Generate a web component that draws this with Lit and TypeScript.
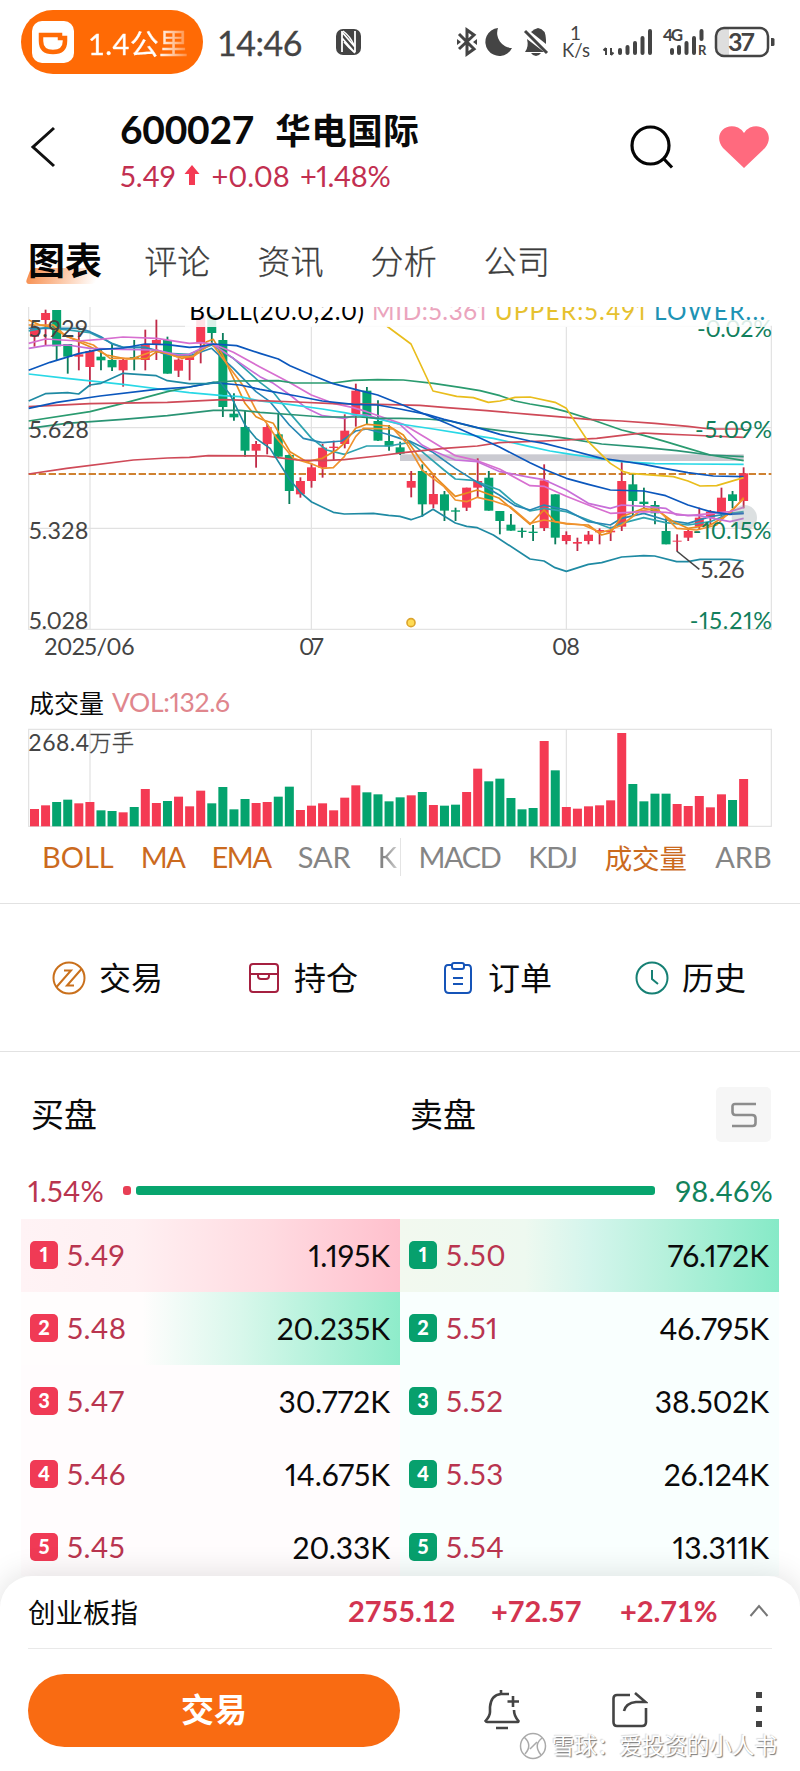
import { LitElement, html, svg, css } from "lit";
import { customElement, property } from "lit/decorators.js";
import { classMap } from "lit/directives/class-map.js";

const RED = "#f43a53";
const GREEN = "#04a36e";

// The charts draw in a space of three units per pixel.
const STEP = 33.24;
const FIRST = 103.5;
const BODY = 27;
const cx = (i: number) => FIRST + i * STEP;

// direction, open/close edges, high, low
type Candle = [string, number, number, number, number];
const CANDLES: Candle[] = [
  ["r", 98, 125, 90, 155], ["r", 54, 75, 44, 150], ["g", 45, 154, 45, 195], ["g", 147, 185, 147, 236],
  ["r", 178, 185, 110, 226], ["r", 168, 216, 165, 275], ["g", 185, 196, 160, 226], ["g", 195, 217, 145, 228],
  ["r", 195, 226, 190, 275], ["g", 186, 192, 135, 226], ["r", 147, 195, 104, 226], ["r", 135, 150, 74, 195],
  ["g", 135, 236, 125, 236], ["r", 194, 227, 190, 246], ["r", 185, 195, 180, 256], ["r", 60, 145, 60, 205],
  ["g", 60, 114, 60, 150], ["g", 135, 336, 114, 366], ["g", 356, 367, 295, 377], ["g", 396, 467, 346, 485],
  ["r", 447, 467, 438, 518], ["r", 396, 447, 387, 478], ["g", 418, 485, 357, 488], ["g", 480, 588, 478, 627],
  ["r", 558, 598, 547, 608], ["r", 517, 558, 505, 578], ["r", 458, 518, 447, 548], ["r", 455, 459, 437, 497],
  ["r", 407, 447, 358, 460], ["r", 287, 357, 266, 395], ["g", 287, 364, 276, 388], ["g", 378, 437, 316, 438],
  ["g", 438, 454, 390, 467], ["g", 457, 476, 440, 480], ["r", 558, 578, 528, 607], ["g", 528, 628, 508, 665],
  ["r", 597, 628, 536, 640], ["g", 598, 647, 588, 678], ["g", 646, 650, 638, 678], ["r", 578, 638, 578, 648],
  ["r", 558, 578, 490, 608], ["g", 548, 647, 528, 647], ["g", 648, 678, 648, 718], ["g", 689, 707, 657, 707],
  ["g", 707, 711, 698, 728], ["g", 710, 714, 690, 738], ["r", 556, 699, 508, 708], ["g", 598, 728, 598, 748],
  ["r", 720, 738, 709, 748], ["r", 741, 746, 728, 768], ["r", 719, 738, 708, 748], ["r", 705, 712, 700, 748],
  ["r", 707, 712, 695, 738], ["r", 558, 695, 500, 708], ["g", 568, 618, 535, 665], ["g", 620, 627, 578, 640],
  ["g", 630, 655, 618, 688], ["g", 708, 748, 670, 748], ["r", 737, 740, 718, 768], ["r", 708, 728, 700, 738],
  ["r", 668, 695, 638, 705], ["r", 650, 668, 645, 690], ["r", 608, 655, 578, 665], ["g", 598, 618, 588, 640],
  ["r", 535, 618, 517, 640],
];

const VOLUMES: [string, number][] = (
  "r52 r63 g73 g80 r69 r73 g48 g46 r42 g58 r112 r70 g76 r89 r60 r107 g69 g118 g51 g82 r70 r73 g89 g119 " +
  "r49 r62 r69 r48 r86 r123 g102 g96 g75 g87 r93 g103 r64 g62 g65 r103 r173 g135 g143 g85 g51 g55 r256 g168 " +
  "r58 r53 r60 r63 r78 r280 g127 g75 g98 g98 r67 r61 r91 r57 r96 g79 r142"
).split(" ").map((v) => [v[0], Number(v.slice(1))]);

const LINES: [string, string][] = [
  ["#2fa3b0", "86,108 136,98 203,105 270,113 336,145 369,157 435,157 502,175 568,178 635,150 700,190 780,262 820,292 870,355 935,430 980,465 1033,478 1100,453 1166,453 1230,442 1266,470 1332,525 1366,552 1420,556 1498,585 1545,625 1590,648 1632,640 1699,650 1765,675 1831,700 1865,685 1931,668 1997,683 2064,690 2131,680 2190,655 2231,650"],
  ["#2788b4", "86,100 236,100 270,110 303,125 336,147 369,157 435,157 502,180 568,183 635,160 700,220 768,290 810,320 868,390 910,430 967,443 1025,438 1067,408 1100,402 1160,417 1200,430 1233,440 1299,472 1366,520 1432,562 1498,600 1545,632 1590,645 1632,630 1699,645 1765,680 1831,690 1865,670 1931,655 1997,675 2064,685 2131,665 2190,655 2231,655"],
  ["#e88c1f", "86,75 120,90 150,95 190,118 236,140 280,160 320,180 380,192 440,190 470,170 502,175 545,190 580,183 620,140 640,133 668,180 705,260 735,325 768,365 790,375 820,385 870,470 920,500 967,490 1010,465 1033,445 1067,400 1100,388 1166,393 1210,420 1266,500 1310,550 1366,604 1432,585 1498,610 1545,650 1590,688 1632,645 1665,680 1699,687 1765,690 1805,720 1831,713 1865,665 1931,640 1975,648 2020,680 2064,700 2131,690 2190,655 2231,608"],
  ["#f0922e", "86,90 160,90 200,125 280,150 330,190 400,190 470,165 530,185 580,185 635,145 668,190 735,280 768,345 800,385 830,430 880,490 930,505 967,520 1000,518 1033,485 1067,425 1090,400 1180,402 1220,445 1266,525 1332,575 1366,615 1400,620 1432,607 1480,618 1531,635 1590,685 1632,675 1699,685 1750,690 1800,712 1831,705 1865,690 1920,648 1970,640 2030,700 2090,705 2150,690 2190,650 2231,612"],
  ["#d76fd0", "86,145 136,132 236,138 300,133 369,126 470,130 568,145 602,143 640,147 700,172 780,216 870,263 934,300 1000,325 1060,338 1100,350 1210,388 1280,430 1366,482 1432,497 1500,523 1590,572 1632,574 1699,604 1765,630 1831,655 1931,650 1997,652 2064,662 2131,656 2190,650 2231,637"],
  ["#c86fd8", "86,160 136,152 203,150 270,160 369,163 469,165 535,180 568,178 635,145 700,190 780,245 820,265 870,300 920,340 967,362 1033,370 1070,360 1100,360 1200,388 1266,450 1299,467 1366,495 1432,500 1500,530 1590,547 1632,554 1699,585 1765,625 1831,640 1865,630 1931,634 1997,640 2030,660 2097,662 2190,680 2231,670"],
  ["#29d8e6", "86,237 200,250 369,268 502,285 568,293 668,302 720,305 780,318 867,328 967,342 1033,353 1133,372 1200,387 1300,402 1400,418 1480,430 1590,455 1650,468 1699,476 1805,492 1865,500 1964,506 2064,507 2231,508"],
  ["#2a9b6f", "86,378 270,350 369,325 502,290 568,276 640,262 700,258 835,257 880,264 1000,264 1060,256 1133,254 1210,255 1300,265 1380,277 1440,287 1500,302 1545,318 1590,327 1650,337 1699,350 1770,372 1865,405 1931,421 1997,440 2064,460 2131,480 2231,497"],
  ["#2a9474", "86,400 200,385 369,373 502,362 640,346 720,346 780,352 890,360 967,366 1080,366 1133,370 1200,370 1280,372 1350,378 1430,398 1500,407 1590,417 1640,422 1699,430 1805,447 1931,457 2030,467 2131,480 2231,485"],
  ["#cf4a58", "86,335 270,326 502,322 668,314 780,317 890,321 1000,326 1133,328 1260,331 1340,338 1460,347 1590,358 1699,367 1765,373 1865,378 1964,385 2064,394 2131,402 2231,402"],
  ["#cf4a58", "86,537 200,520 400,495 502,489 568,487 625,482 800,483 835,488 890,495 967,497 1033,494 1133,483 1210,473 1332,460 1432,453 1498,443 1630,438 1699,435 1790,430 1890,418 1931,414 1964,416 2064,420 2131,423 2231,427"],
  ["#0b57bd", "86,226 150,202 236,176 300,163 369,159 435,147 502,149 568,157 600,155 640,147 710,152 780,175 835,192 870,212 935,240 1000,266 1080,287 1133,300 1210,331 1280,360 1340,385 1432,425 1500,457 1590,503 1630,522 1699,550 1765,568 1831,585 1931,588 1997,602 2064,630 2131,650 2190,658 2231,655"],
  ["#0b57bd", "86,340 170,322 300,303 469,283 568,276 640,263 720,270 780,283 890,303 967,318 1060,328 1133,330 1200,342 1280,358 1332,373 1432,398 1500,418 1590,438 1632,445 1699,462 1805,490 1865,498 1931,508 1997,521 2064,533 2140,543 2231,545"],
  ["#e9bd1c", "1160,93 1233,147 1299,288 1370,304 1420,308 1465,322 1500,318 1545,307 1590,306 1665,322 1699,340 1725,380 1765,440 1831,505 1870,530 1890,535 2020,545 2064,558 2100,573 2150,572 2231,548"],
  ["#1f8aa3", "86,318 136,296 203,293 236,297 270,270 303,265 369,235 469,242 502,257 568,266 625,266 660,262 690,298 735,390 768,430 810,460 868,552 901,592 935,621 1000,652 1033,657 1120,655 1166,661 1200,664 1233,674 1266,663 1299,643 1366,684 1400,694 1432,698 1480,720 1590,792 1632,798 1665,818 1699,829 1765,808 1805,803 1865,786 1931,782 1964,783 2030,800 2064,800 2100,793 2190,793 2231,798"],
];

const GRID_X = [270, 934, 1699];

@customElement("price-chart")
export class PriceChart extends LitElement {
  static styles = css`
    :host { display: block; }
    svg { display: block; width: 800px; height: 361px; }
    text { font-family: Lato, "Noto Sans CJK SC", sans-serif; font-size: 70px; fill: #444; font-variant-numeric: proportional-nums; }
    .grid { stroke: #e1e1e1; stroke-width: 3.5; fill: none; }
    .avg { fill: none; stroke-width: 5; stroke-linejoin: round; }
    .pct { fill: #127f5c; }
    .legend { font-size: 73px; }
  `;
  private label(t: string, x0: number, x1: number, y: number, cls = "", fill = "") {
    return svg`<text class=${cls} x=${x0} y=${y} textLength=${x1 - x0} lengthAdjust="spacing" style=${fill ? `fill:${fill}` : ""}>${t}</text>`;
  }
  render() {
    return html`<svg viewBox="0 36 2400 1083">
      <rect class="grid" x="86" y="94" width="2228" height="909"></rect>
      <path class="grid" d="M86 36V94"></path>
      ${[398, 700].map((y) => svg`<path class="grid" d="M86 ${y}H2314"></path>`)}
      ${GRID_X.map((x) => svg`<path class="grid" d="M${x} ${x === 270 ? 36 : 94}V1003"></path>`)}
      <rect x="1200" y="478" width="1031" height="20" fill="#8a8a98" opacity=".45"></rect>
      <path d="M86 537H2314" stroke="#cf8232" stroke-width="6" stroke-dasharray="22 8"></path>
      ${CANDLES.map(([d, a, b, h, l], i) => {
        const c = d === "r" ? RED : GREEN;
        return svg`<path d="M${cx(i)} ${h}V${l}" stroke=${d === "r" ? "#c02a48" : "#0b7d5c"} stroke-width="5.5"></path>
          <rect x=${cx(i) - BODY / 2} y=${a} width=${BODY} height=${b - a} fill=${c}></rect>`;
      })}
      ${LINES.map(([c, p]) => svg`<polyline class="avg" points=${p} stroke=${c}></polyline>`)}
      <circle cx="2233" cy="668" r="38" fill="#9aa5a8" opacity=".35"></circle>
      <circle cx="1233" cy="983" r="12" fill="#ffdc55" stroke="#dca52e" stroke-width="5"></circle>
      <path d="M2030 768L2098 823" stroke="#444" stroke-width="4.5"></path>
      ${this.label("5.26", 2102, 2233, 850)}
      ${this.label("5.929", 87, 263, 126)}
      ${this.label("5.628", 87, 267, 428)}
      ${this.label("5.328", 87, 265, 731)}
      ${this.label("5.028", 87, 265, 1002)}
      ${this.label("-0.02%", 2091, 2316, 126, "pct")}
      ${this.label("-5.09%", 2085, 2316, 428, "pct")}
      ${this.label("-10.15%", 2078, 2314, 731, "pct")}
      ${this.label("-15.21%", 2069, 2316, 1002, "pct")}
      <rect x="555" y="36" width="1757" height="60" fill="#fff" opacity=".85"></rect>
      ${this.label("BOLL(20.0,2.0)", 568, 1092, 74, "legend", "#000")}
      ${this.label("MID:5.361", 1116, 1460, 74, "legend", "#eba4bd")}
      ${this.label("UPPER:5.491", 1484, 1937, 74, "legend", "#e6c12e")}
      ${this.label("LOWER...", 1962, 2296, 74, "legend", "#1e93b4")}
      ${this.label("2025/06", 133, 403, 1080)}
      ${this.label("07", 897, 971, 1080)}
      ${this.label("08", 1656, 1740, 1080)}
    </svg>`;
  }
}

@customElement("volume-chart")
export class VolumeChart extends LitElement {
  static styles = css`
    :host { display: block; }
    svg { display: block; width: 800px; height: 104px; }
    text { font-family: Lato, "Noto Sans CJK SC", sans-serif; font-size: 69px; fill: #444; }
    .grid { stroke: #e1e1e1; stroke-width: 3.5; fill: none; }
    .cjk { font-weight: 300; font-size: 67px; stroke: #444; stroke-width: 1; }
  `;
  render() {
    return html`<svg viewBox="0 0 2400 312">
      <rect class="grid" x="86" y="7" width="2228" height="291"></rect>
      ${GRID_X.map((x) => svg`<path class="grid" d="M${x} 7V298"></path>`)}
      ${VOLUMES.map(([d, h], i) => svg`<rect x=${cx(i) - BODY / 2} y=${298 - h} width=${BODY} height=${h} fill=${d === "r" ? RED : GREEN}></rect>`)}
      <text x="85" y="72" textLength="182">268.4</text>
      <text class="cjk" x="268" y="71" textLength="134">万手</text>
    </svg>`;
  }
}

@customElement("book-row")
export class BookRow extends LitElement {
  @property() side = "buy";
  @property() level = "1";
  @property() price = "";
  @property() amount = "";
  @property() tint = "";
  static styles = css`
    :host { display: block; font-variant-numeric: proportional-nums; }
    .row { height: 73px; box-sizing: border-box; display: flex; align-items: center; padding: 0 10px 0 9px; }
    .buy { background: #fffcfd; }
    .sell { background: #f9fffe; }
    .hot { background: linear-gradient(90deg, #fff3f5 0%, #fff0f2 30%, #ffdbe1 65%, #ffc0cd 100%); }
    .flash { background: linear-gradient(90deg, #fffdfd 0%, #fffdfd 32%, #d8f7eb 58%, #8eecca 100%); }
    .deep { background: linear-gradient(90deg, #f2f9ef 0%, #eef9f0 33%, #d4f5ec 50%, #b6f1dc 70%, #86eac7 100%); }
    .badge { width: 28px; height: 28px; border-radius: 5px; color: #fff; font-weight: 900; font-size: 20px; line-height: 27px; text-align: center; margin-top: -2px; }
    .red { background: #f03a55; }
    .green { background: #07a06d; }
    .price { color: #b9354f; font-size: 29.5px; letter-spacing: .4px; margin-left: 9px; flex: 1; margin-top: -2px; }
    .amount { font-size: 30px; color: #0a0a0a; margin-top: -2px; letter-spacing: -.1px; }
  `;
  render() {
    return html`<div class=${classMap({ row: true, [this.side]: true, [this.tint || "plain"]: true })}>
      <span class=${classMap({ badge: true, red: this.side === "buy", green: this.side === "sell" })}>${this.level}</span>
      <span class="price">${this.price}</span><span class="amount">${this.amount}</span>
    </div>`;
  }
}

const BUY = [["5.49", "1.195K", "hot"], ["5.48", "20.235K", "flash"], ["5.47", "30.772K", ""], ["5.46", "14.675K", ""], ["5.45", "20.33K", ""]];
const SELL = [["5.50", "76.172K", "deep"], ["5.51", "46.795K", ""], ["5.52", "38.502K", ""], ["5.53", "26.124K", ""], ["5.54", "13.311K", ""]];

@customElement("app-root")
export class AppRoot extends LitElement {
  static styles = css`
    :host { display: block; width: 800px; height: 1771px; overflow: hidden; position: relative; background: #fff;
      font-family: Lato, "Noto Sans CJK SC", sans-serif; color: #0a0a0a; }
    * { box-sizing: border-box; }
    svg { display: block; flex: none; }
    .status { height: 86px; display: flex; align-items: flex-start; padding: 10px 0 0 21px; white-space: nowrap; }
    .pill { width: 182px; height: 64px; border-radius: 32px; background: #ff6a05; display: flex; align-items: center; padding-left: 11px; color: #fff; }
    .dist { font-size: 29px; margin-left: 14px; letter-spacing: .4px; width: 103px; overflow: hidden; font-weight: 400; -webkit-text-stroke: .4px transparent;
      background: linear-gradient(90deg, #fff 68%, rgba(255,255,255,.15) 100%); -webkit-background-clip: text; color: transparent; }
    .clock { font-size: 34px; color: #444; margin: 12px 0 0 14px; width: 84px; letter-spacing: -.5px; -webkit-text-stroke: .3px #444; }
    .nfc { margin: 18px 0 0 34px; }
    .sys { margin-left: 89px; margin-top: 14px; }
    .head { height: 129px; display: flex; padding-left: 28px; }
    .back { margin: 39px 0 0 0; }
    .title { margin-left: 61px; width: 508px; padding-top: 20px; white-space: nowrap; }
    .name { display: flex; height: 46px; align-items: center; font-weight: 700; }
    .code { font-size: 39px; letter-spacing: -.25px; }
    .corp { font-size: 35.5px; margin-left: 21px; letter-spacing: .5px; margin-top: -2px; }
    .quote { display: flex; height: 46px; align-items: center; color: #c22f50; font-size: 29px; font-variant-numeric: proportional-nums; }
    .up { margin: 0 12px 0 8px; }
    .pc { margin-left: 10px; letter-spacing: -.4px; }
    .q { margin-top: 37px; }
    .heart { margin-top: 38px; margin-left: 42px; }
    .tabs { height: 92px; display: flex; align-items: center; padding: 0 0 0 28px; font-size: 33px; font-weight: 300; color: #3c3c3c; -webkit-text-stroke: .3px currentColor; }
    .tabs span { margin-right: 47px; letter-spacing: .1px; margin-top: -2px; }
    .tabs .on { -webkit-text-stroke: 0; font-weight: 700; font-size: 37px; color: #050505; margin-right: 42px; position: relative; line-height: 48px; z-index: 0; margin-top: 0; }
    .on::before { content: ""; position: absolute; left: 0; bottom: 1px; width: 70px; height: 16px; z-index: -1; transform: skewX(-20deg);
      background: linear-gradient(90deg, #f79254, #fcc7a6 50%, #fff); border-radius: 4px; }
    .vol-title { height: 59px; display: flex; align-items: center; padding: 9px 0 0 29px; font-size: 25px; }
    .vol-title b { font-weight: 400; color: #e0868d; margin-left: 8px; font-size: 26.5px; letter-spacing: -.35px; font-variant-numeric: proportional-nums; }
    .studies { height: 72px; display: flex; padding: 0 29px 21px 42px; align-items: center; font-size: 29px; color: #858585; font-weight: 400; white-space: nowrap; }
    .studies span { flex: none; }
    .studies .act { color: #cb6a1e; }
    .main { width: 359px; height: 38px; display: flex; gap: 27px; overflow: hidden; border-right: 1px solid #e4e4e4; align-items: center; }
    .sub { width: 371px; height: 38px; display: flex; gap: 28px; overflow: hidden; padding-left: 18px; align-items: center; }
    .studies .ma { letter-spacing: -1.4px; }
    .studies .ema { letter-spacing: -1.4px; }
    .studies .cj { font-size: 27.5px; }
    .fade { background: linear-gradient(90deg, #858585 30%, #ccc 100%); -webkit-background-clip: text; color: transparent; }
    .actions { height: 149px; border-top: 1px solid #e2e2e2; border-bottom: 1px solid #e2e2e2; display: flex; align-items: center; font-size: 32px; padding-left: 52px; }
    .action { display: flex; flex: none; align-items: center; width: 195px; gap: 13px; }
    .action.wide { width: 194px; }
    .action.last { width: auto; }
    .action i { font-style: normal; margin-top: -4px; }
    .book-head { height: 119px; display: flex; align-items: center; padding: 10px 28px 0 31px; font-size: 33px; }
    .book-head span { width: 379px; margin-top: -7px; }
    .book-head .s { width: 306px; }
    .mode { width: 55px; height: 55px; border-radius: 5px; background: #f6f6f6; display: grid; place-items: center; margin-top: -4px; }
    .ratio { height: 48px; display: flex; align-items: center; padding: 0 27px 10px 28px; font-size: 29px; font-variant-numeric: proportional-nums; }
    .ratio .b { color: #b9354f; width: 95px; letter-spacing: .3px; }
    .ratio .a { color: #12835c; margin-left: auto; letter-spacing: .2px; }
    .dot { width: 8px; height: 9px; border-radius: 3px; background: #e83f55; }
    .bar { width: 519px; height: 9px; border-radius: 3px; background: #07a56e; margin-left: 5px; }
    .book { display: grid; grid-template-columns: 379px 379px; margin-left: 21px; height: 357px; overflow: hidden; }
    .sheet { position: relative; height: 196px; background: #fff; border-radius: 32px 32px 0 0; box-shadow: 0 -2px 30px rgba(0,0,0,.12); padding: 0 28px; }
    .index { height: 73px; display: flex; align-items: center; border-bottom: 1px solid #e9e9e9; font-size: 27.5px; padding-bottom: 3px; }
    .index b { color: #d33450; font-size: 29px; font-weight: 700; white-space: nowrap; letter-spacing: -.1px; }
    .index span { width: 320px; }
    .index b.n1 { width: 143px; } .index b.n2 { width: 129px; } .index b.n3 { width: 129px; }
    .foot { display: flex; align-items: flex-start; padding-top: 25px; }
    .cta { width: 372px; height: 73px; border-radius: 37px; background: #f96b12; color: #fff; font-weight: 700; font-size: 33px; text-align: center; line-height: 70px; }
    .bell { margin: 14px 0 0 84px; } .share { margin: 17px 0 0 92px; } .more { margin: 17px 0 0 108px; }
    .mark { position: absolute; right: 23px; top: 1730px; display: flex; align-items: center; gap: 5px; font-size: 22.5px; line-height: 32px; color: #fff;
      text-shadow: 1px 1px 1px #777, -1px -1px 1px #ddd; white-space: nowrap; }
  `;
  render() {
    return html`
      <div class="status">
        <div class="pill">
          <svg width="42" height="42" viewBox="0 0 42 42"><rect width="42" height="42" rx="10" fill="#fff"/><path d="M9 14H28V17H33V20C33 28 28 31 21 31S9 28 9 20Z" fill="none" stroke="#ff6a05" stroke-width="4.500"/></svg>
          <span class="dist">1.4公里</span>
        </div>
        <span class="clock">14:46</span>
        <svg class="nfc" width="27" height="28" viewBox="0 0 27 28"><rect x="1" y="1" width="25" height="26" rx="7" fill="#444"/><path d="M7 3V24M20 3V24M7 4L20 19M7 10L20 25" stroke="#fff" stroke-width="1.800" fill="none"/><path d="M8 3Q15 8 19 17M9 14Q14 20 19 24" stroke="#fff" stroke-width="1.500" fill="none"/></svg>
        <svg class="sys" width="324" height="38" viewBox="452 24 324 38" fill="#444">
          <g fill="none" stroke="#444" stroke-width="3"><path d="M460 34L475 49L468 54V30L475 35L460 49"/></g><path d="M458 39L462 42L458 45ZM478 39L474 42L478 45Z"/>
          <path d="M499 28A14 14 0 1 0 513 48A15 15 0 0 1 499 28Z"/>
          <path d="M532 32Q535 29 539 28Q547 29 547 40L547 44Z"/><path d="M528 39L545 52H526Q530 47 528 39ZM532 53H542Q540 56 537 56T532 53Z"/><path d="M526 31L548 53" stroke="#444" stroke-width="3"/>
          <text x="571" y="40" font-size="19">1</text><text x="563" y="57" font-size="18.500" textLength="28">K/s</text>
          <path d="M607 48V55M604.500 50.500L607 48M612 48V55M614.500 52.500L612 55" stroke="#444" stroke-width="2" fill="none"/>
          <g stroke="#444" stroke-width="4" stroke-linecap="round"><path d="M621 50V53M628.500 47V53M636 43V53M643.500 38V53M651 31V53M673 50V53M680 47V53M687.500 43V53M695 38V53M702.500 31V39"/></g>
          <text x="664" y="41" font-size="17" font-weight="700" textLength="20">4G</text><text x="699" y="55" font-size="13" font-weight="700">R</text>
          <path d="M717 32Q717 28 724 28H730V56H724Q717 56 717 51Z" fill="#dedede"/><rect x="717" y="28" width="52" height="28" rx="8" fill="none" stroke="#444" stroke-width="2.500"/>
          <path d="M772 38h2q1.500 0 1.500 1.500v5q0 1.500-1.500 1.500h-2z"/><text x="729" y="51" font-size="25" font-weight="700" textLength="27">37</text>
        </svg>
      </div>
      <div class="head">
        <svg class="back" width="31" height="44" viewBox="0 0 31 44"><path d="M26 3L5 22L26 41" fill="none" stroke="#111" stroke-width="3"/></svg>
        <div class="title">
          <div class="name"><span class="code">600027</span><span class="corp">华电国际</span></div>
          <div class="quote"><span>5.49</span><svg class="up" width="16" height="22" viewBox="0 0 16 22"><path d="M8 1L15.500 10H11V21H5V10H.5Z" fill="#f43a53"/></svg><span>+0.08</span><span class="pc">+1.48%</span></div>
        </div>
        <svg class="q" width="48" height="48" viewBox="0 0 48 48" fill="none" stroke="#050505" stroke-width="3.200"><circle cx="22.500" cy="22.500" r="18.500"/><path d="M35 35L44 44.500"/></svg>
        <svg class="heart" width="52" height="46" viewBox="0 0 52 46"><path d="M26 44L5 24C-5 12 6-2 20 3.500Q24 5.500 26 9Q28 5.500 32 3.500C46-2 57 12 47 24Z" fill="#ff6a7e"/></svg>
      </div>
      <div class="tabs"><span class="on">图表</span><span>评论</span><span>资讯</span><span>分析</span><span>公司</span></div>
      <price-chart></price-chart>
      <div class="vol-title">成交量<b>VOL:132.6</b></div>
      <volume-chart></volume-chart>
      <div class="studies">
        <div class="main"><span class="act">BOLL</span><span class="act ma">MA</span><span class="act ema">EMA</span><span>SAR</span><span class="fade">K</span></div>
        <div class="sub"><span class="ema">MACD</span><span class="ema">KDJ</span><span class="act cj">成交量</span><span>ARB</span></div>
      </div>
      <div class="actions">
        <div class="action"><svg width="34" height="34" viewBox="0 0 34 34" fill="none" stroke="#c9701c" stroke-width="2"><circle cx="17" cy="17" r="15.500"/><path d="M4.500 26L19 9.500H12M29.500 8L15 24.500H22"/></svg><i>交易</i></div>
        <div class="action wide"><svg width="34" height="34" viewBox="0 0 34 34" fill="none" stroke="#a52040" stroke-width="2"><rect x="3" y="3" width="28" height="28" rx="3"/><path d="M3 13H31M11 13V15Q11 18 14 18H19Q22 18 22 15V13"/></svg><i>持仓</i></div>
        <div class="action wide"><svg width="34" height="34" viewBox="0 0 34 34" fill="none" stroke="#1554b8" stroke-width="2"><path d="M11 4H7Q4 4 4 8V28Q4 32 8 32H26Q30 32 30 28V8Q30 4 27 4H23"/><rect x="11" y="2" width="12" height="6" rx="2"/><path d="M12 17H22M12 23H22"/></svg><i>订单</i></div>
        <div class="action last"><svg width="34" height="34" viewBox="0 0 34 34" fill="none" stroke="#168074" stroke-width="2"><circle cx="17" cy="17" r="15.500"/><path d="M17 9V18L23 23"/></svg><i>历史</i></div>
      </div>
      <div class="book-head"><span>买盘</span><span class="s">卖盘</span><div class="mode"><svg width="26" height="26" viewBox="0 0 26 26" fill="none" stroke="#8d8d8d" stroke-width="2.600"><path d="M25 2H4Q1.500 2 1.500 4.500V10Q1.500 13 4.500 13H21Q24.500 13 24.500 16V21Q24.500 24 21.500 24H1"/></svg></div></div>
      <div class="ratio"><span class="b">1.54%</span><div class="dot"></div><div class="bar"></div><span class="a">98.46%</span></div>
      <div class="book">
        ${BUY.map((b, i) => html`<book-row side="buy" .level=${String(i + 1)} .price=${b[0]} .amount=${b[1]} .tint=${b[2]}></book-row>
          <book-row side="sell" .level=${String(i + 1)} .price=${SELL[i][0]} .amount=${SELL[i][1]} .tint=${SELL[i][2]}></book-row>`)}
      </div>
      <div class="sheet">
        <div class="index"><span>创业板指</span><b class="n1">2755.12</b><b class="n2">+72.57</b><b class="n3">+2.71%</b><svg width="20" height="13" viewBox="0 0 20 13"><path d="M1.500 12L10 2L18.500 12" fill="none" stroke="#777" stroke-width="2"/></svg></div>
        <div class="foot">
          <div class="cta">交易</div>
          <svg class="bell" width="36" height="42" viewBox="0 0 36 42" fill="none" stroke="#444" stroke-width="2.600"><path d="M25 6H17Q7 7 6 19V24Q6 28 1.500 33Q2 34 3 34H33Q34.500 34 34.500 33Q30 28 30 22M17 2V7M12 40H24M29 8V19M23.500 13.500H35"/></svg>
          <svg class="share" width="36" height="38" viewBox="0 0 36 38" fill="none" stroke="#444" stroke-width="2.600"><path d="M18 4H5Q1.500 4 1.500 7.500V31Q1.500 35 5 35H30Q34 35 34 31V17M23 2L33.500 11H24Q14 12 12 20"/></svg>
          <svg class="more" width="6" height="36" viewBox="0 0 6 36" fill="#444"><path d="M0 1H6V7H0ZM0 15H6V21H0ZM0 30H6V36H0Z"/></svg>
        </div>
      </div>
      <div class="mark"><svg width="28" height="28" viewBox="0 0 28 28" fill="none" stroke="#aaa" stroke-width="1.500"><circle cx="14" cy="14" r="12.500"/><path d="M5 5Q14 13 6 22M23 6Q14 13 22 23M11 17L18 10"/></svg><span>雪球：爱投资的小人书</span></div>
    `;
  }
}
